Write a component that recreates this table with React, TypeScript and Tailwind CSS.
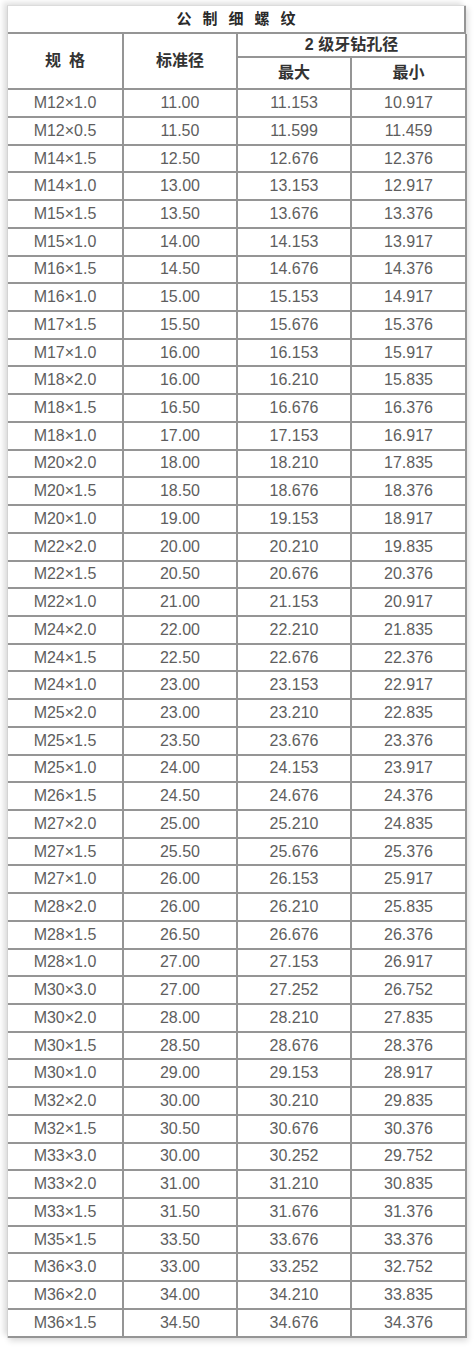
import React from "react";

const rows: [string, string, string, string][] = [
  ["M12×1.0", "11.00", "11.153", "10.917"],
  ["M12×0.5", "11.50", "11.599", "11.459"],
  ["M14×1.5", "12.50", "12.676", "12.376"],
  ["M14×1.0", "13.00", "13.153", "12.917"],
  ["M15×1.5", "13.50", "13.676", "13.376"],
  ["M15×1.0", "14.00", "14.153", "13.917"],
  ["M16×1.5", "14.50", "14.676", "14.376"],
  ["M16×1.0", "15.00", "15.153", "14.917"],
  ["M17×1.5", "15.50", "15.676", "15.376"],
  ["M17×1.0", "16.00", "16.153", "15.917"],
  ["M18×2.0", "16.00", "16.210", "15.835"],
  ["M18×1.5", "16.50", "16.676", "16.376"],
  ["M18×1.0", "17.00", "17.153", "16.917"],
  ["M20×2.0", "18.00", "18.210", "17.835"],
  ["M20×1.5", "18.50", "18.676", "18.376"],
  ["M20×1.0", "19.00", "19.153", "18.917"],
  ["M22×2.0", "20.00", "20.210", "19.835"],
  ["M22×1.5", "20.50", "20.676", "20.376"],
  ["M22×1.0", "21.00", "21.153", "20.917"],
  ["M24×2.0", "22.00", "22.210", "21.835"],
  ["M24×1.5", "22.50", "22.676", "22.376"],
  ["M24×1.0", "23.00", "23.153", "22.917"],
  ["M25×2.0", "23.00", "23.210", "22.835"],
  ["M25×1.5", "23.50", "23.676", "23.376"],
  ["M25×1.0", "24.00", "24.153", "23.917"],
  ["M26×1.5", "24.50", "24.676", "24.376"],
  ["M27×2.0", "25.00", "25.210", "24.835"],
  ["M27×1.5", "25.50", "25.676", "25.376"],
  ["M27×1.0", "26.00", "26.153", "25.917"],
  ["M28×2.0", "26.00", "26.210", "25.835"],
  ["M28×1.5", "26.50", "26.676", "26.376"],
  ["M28×1.0", "27.00", "27.153", "26.917"],
  ["M30×3.0", "27.00", "27.252", "26.752"],
  ["M30×2.0", "28.00", "28.210", "27.835"],
  ["M30×1.5", "28.50", "28.676", "28.376"],
  ["M30×1.0", "29.00", "29.153", "28.917"],
  ["M32×2.0", "30.00", "30.210", "29.835"],
  ["M32×1.5", "30.50", "30.676", "30.376"],
  ["M33×3.0", "30.00", "30.252", "29.752"],
  ["M33×2.0", "31.00", "31.210", "30.835"],
  ["M33×1.5", "31.50", "31.676", "31.376"],
  ["M35×1.5", "33.50", "33.676", "33.376"],
  ["M36×3.0", "33.00", "33.252", "32.752"],
  ["M36×2.0", "34.00", "34.210", "33.835"],
  ["M36×1.5", "34.50", "34.676", "34.376"],
];

const font = { fontFamily: '"Liberation Sans", Arial, "Noto Sans CJK SC", sans-serif' };

export default function App() {
  return (
    <div className="w-[474px] h-[1350px] bg-white pl-[7px] pt-[5px]" style={font}>
      <div className="w-[459px] bg-white border-l border-t border-l-[#d4d4d4] border-t-[#dcdcdc] shadow-[-4px_-3px_5px_rgba(0,0,0,0.10),2px_3px_6px_rgba(0,0,0,0.14)]">
        <div className="h-[28px] border-r-2 border-b-2 border-[#959595] flex items-center justify-center text-[15px] font-bold text-[#2a2a2a] tracking-[11px] pl-[11px]">
          公制细螺纹
        </div>
        <div className="grid grid-cols-[116px_114px_114px_115px] grid-rows-[24px_32px] text-[16px] font-bold text-[#333333]">
          <div className="row-span-2 border-r-2 border-b-2 border-[#959595] flex items-center justify-center tracking-[8px] pl-[8px]">
            规格
          </div>
          <div className="row-span-2 border-r-2 border-b-2 border-[#959595] flex items-center justify-center">
            标准径
          </div>
          <div className="col-span-2 border-r-2 border-b-2 border-[#959595] flex items-center justify-center">
            2 级牙钻孔径
          </div>
          <div className="border-r-2 border-b-2 border-[#959595] flex items-center justify-center">
            最大
          </div>
          <div className="border-r-2 border-b-2 border-[#959595] flex items-center justify-center">
            最小
          </div>
        </div>
        {rows.map((r, i) => (
          <div
            key={i}
            className={`grid grid-cols-[116px_114px_114px_115px] text-[16px] text-[#5e5e5e] ${i === 0 ? "h-[28px]" : "h-[27.73px]"}`}
          >
            {r.map((c, j) => (
              <div
                key={j}
                className="border-r-2 border-b-2 border-[#959595] flex items-center justify-center"
              >
                {c}
              </div>
            ))}
          </div>
        ))}
      </div>
    </div>
  );
}
